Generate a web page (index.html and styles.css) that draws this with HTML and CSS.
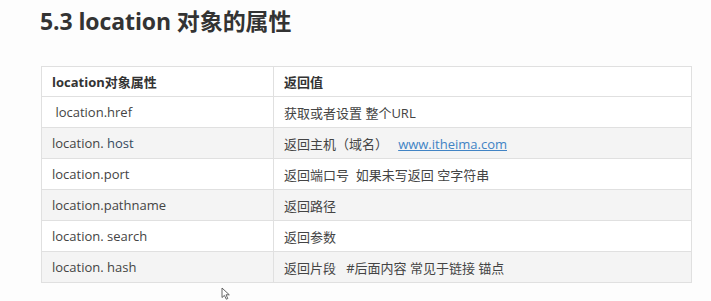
FILE: index.html
```html
<!DOCTYPE html>
<html lang="zh">
<head>
<meta charset="utf-8">
<link rel="stylesheet" href="styles.css">
</head>
<body>
<div class="page">
  <h2 class="title">5.3 location 对象的属性</h2>
  <table class="props">
    <thead>
      <tr><th class="c1">location对象属性</th><th>返回值</th></tr>
    </thead>
    <tbody>
      <tr><td>&nbsp;location.href</td><td>获取或者设置 整个URL</td></tr>
      <tr><td>location. <span class="code">host</span></td><td>返回主机（域名）&nbsp;&nbsp;&nbsp;<a class="link" href="#">www.itheima.com</a></td></tr>
      <tr><td>location.port</td><td>返回端口号&nbsp;&nbsp;如果未写返回 空字符串</td></tr>
      <tr><td>location.pathname</td><td>返回路径</td></tr>
      <tr><td>location. search</td><td>返回参数</td></tr>
      <tr><td>location. hash</td><td>返回片段&nbsp;&nbsp;&nbsp;#后面内容 常见于链接 锚点</td></tr>
    </tbody>
  </table>
  <svg class="cursor" width="10" height="13" viewBox="0 0 10 13"><path d="M1 1 L1 10.5 L3.4 8.4 L5.3 12.2 L6.8 11.5 L5 7.8 L8.3 7.8 Z" fill="#fff" stroke="#555" stroke-width="0.9" stroke-linejoin="round"/></svg>
</div>
</body>
</html>
```
FILE: styles.css
```css
html, body {
  margin: 0;
  padding: 0;
  background: #fdfdfd;
}
.page {
  position: relative;
  height: 301px;
  padding: 5px 20px 0 41px;
  box-sizing: border-box;
  font-family: "Open Sans", "Noto Sans CJK SC", sans-serif;
  color: #333;
}
.title {
  margin: 0 0 0 -1px;
  font-size: 23px;
  font-weight: 700;
  line-height: 32px;
  color: #333;
  letter-spacing: -0.1px;
}
.props {
  margin-top: 29px;
  width: 651px;
  border-collapse: collapse;
  font-size: 13px;
  color: #444;
}
.props th, .props td {
  border: 1.5px solid #e0e0e0;
  height: 30px;
  padding: 0 10px;
  text-align: left;
  white-space: nowrap;
}
.props th {
  font-weight: 700;
  color: #333;
  background: #fff;
  height: 29px;
}
.props .c1 {
  width: 211px;
}
.props tbody tr:nth-child(odd) td {
  background: #fff;
}
.props tbody tr:nth-child(even) td {
  background: #f4f4f4;
}
.code {
  color: #34495e;
}
.link {
  color: #4183c4;
  text-decoration: underline;
}
.cursor {
  position: absolute;
  left: 221px;
  top: 287px;
}
```
